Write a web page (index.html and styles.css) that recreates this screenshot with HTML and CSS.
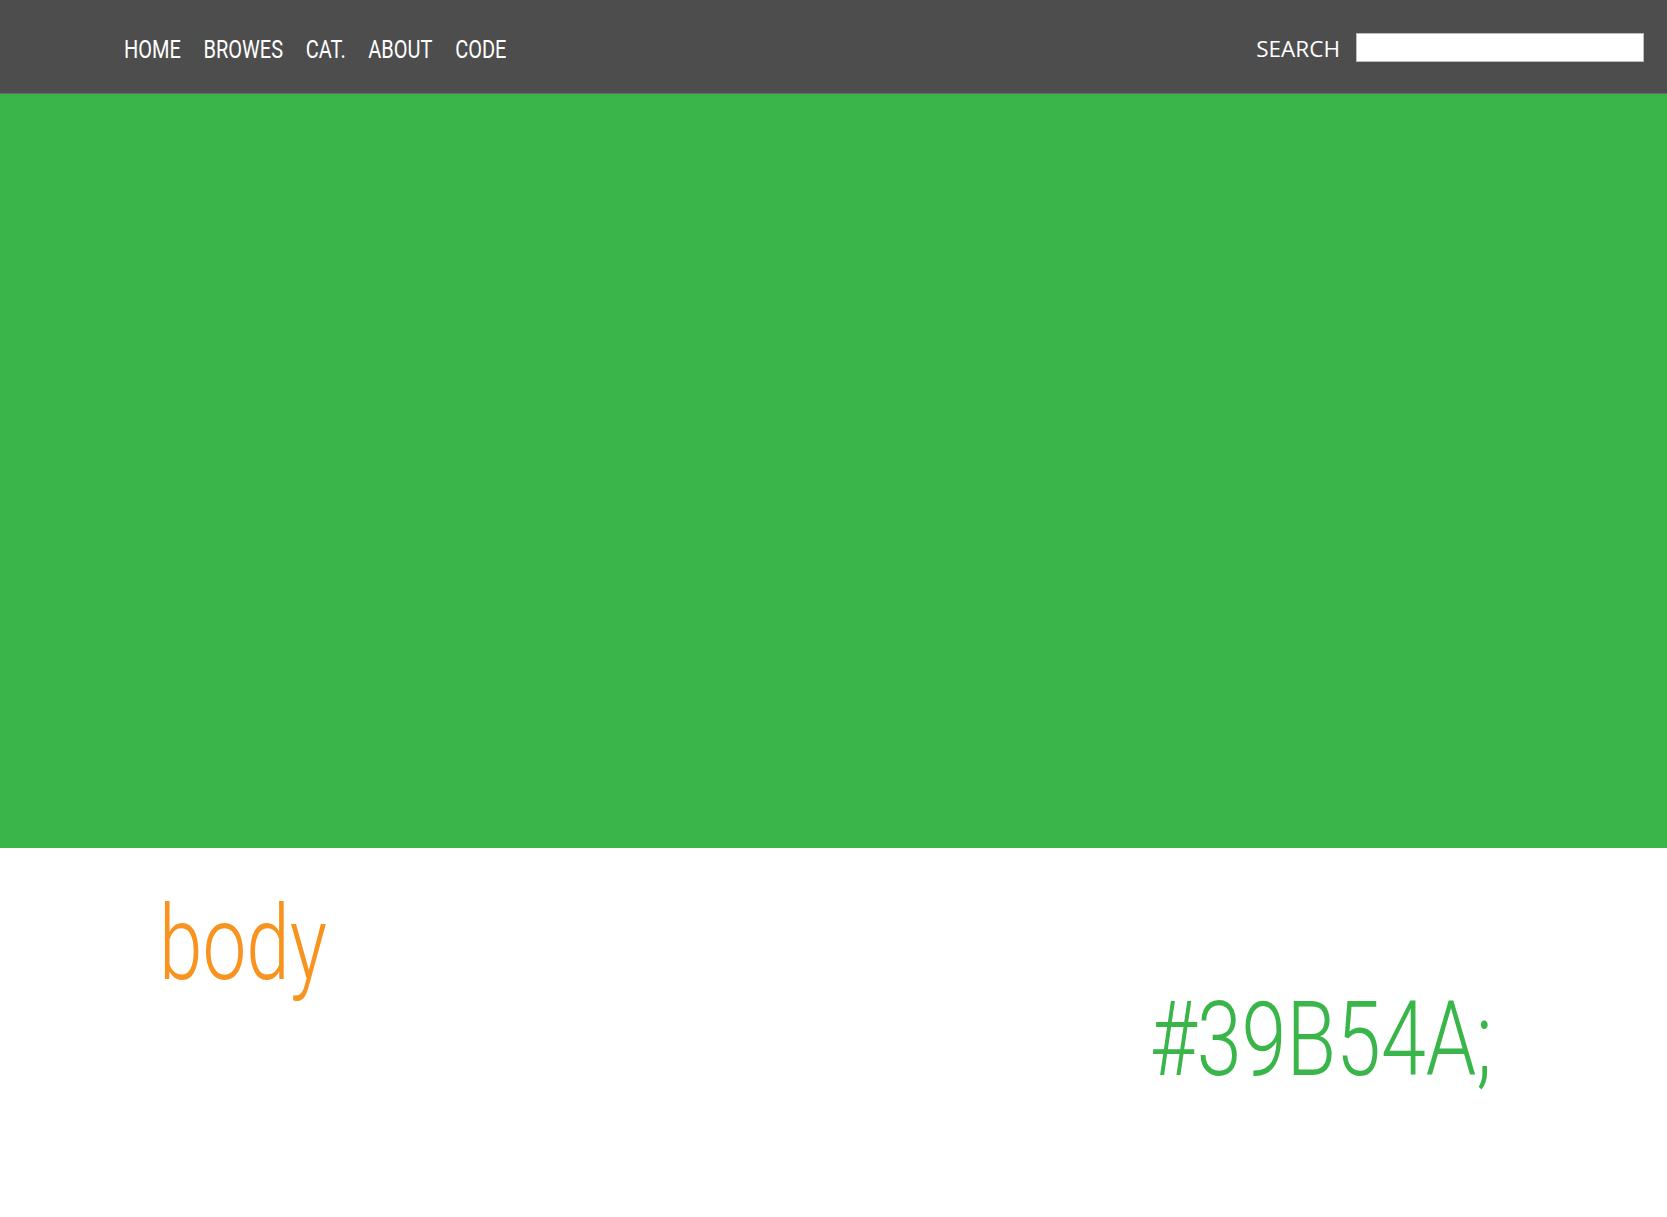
FILE: index.html
```html
<!DOCTYPE html>
<html lang="en">
<head>
<meta charset="utf-8">
<title>Colour</title>
<link rel="stylesheet" href="styles.css">
</head>
<body>
<header class="topbar">
  <nav class="nav">
    <a class="nav-link" href="#">HOME</a>
    <a class="nav-link" href="#">BROWES</a>
    <a class="nav-link" href="#">CAT.</a>
    <a class="nav-link" href="#">ABOUT</a>
    <a class="nav-link" href="#">CODE</a>
  </nav>
  <form class="search">
    <label class="search-label" for="q">SEARCH</label>
    <input class="search-input" id="q" type="text">
  </form>
</header>
<main class="hero"></main>
<section class="swatch">
  <div class="swatch-name">body</div>
  <div class="swatch-hex">#39B54A;</div>
</section>
</body>
</html>
```
FILE: styles.css
```css
html, body {
  margin: 0;
  padding: 0;
  background: #ffffff;
}
.topbar {
  height: 93px;
  background: #4d4d4d;
  border-bottom: 1px solid #6a6a6a;
  display: flex;
  align-items: center;
  justify-content: space-between;
  padding: 0 23px 0 124px;
}
.nav {
  display: flex;
  gap: 30px;
  transform: scaleX(0.755);
  transform-origin: left center;
  margin-top: 5px;
}
.nav-link {
  font-family: Roboto, "Liberation Sans", sans-serif;
  font-weight: 400;
  font-size: 26.5px;
  line-height: 1;
  color: #ffffff;
  text-decoration: none;
}
.search {
  display: flex;
  align-items: center;
  gap: 16px;
  margin: 0;
}
.search-label {
  font-family: "Open Sans", "Liberation Sans", sans-serif;
  font-size: 22.5px;
  color: #ffffff;
  line-height: 1;
  margin-top: 6px;
}
.search-input {
  width: 286px;
  height: 27px;
  box-sizing: content-box;
  padding: 0;
  border: 1px solid #bdbdbd;
  background: #ffffff;
  margin: 1px 0 0 0;
}
.hero {
  display: block;
  height: 754px;
  background: #3ab54a;
}
.swatch {
  display: flex;
  align-items: flex-start;
  justify-content: space-between;
  padding: 0 175px 0 159px;
  height: 369px;
}
.swatch-name {
  font-family: Roboto, "Liberation Sans", sans-serif;
  font-weight: 300;
  font-size: 103px;
  line-height: 1;
  color: #f7931e;
  padding-top: 44px;
  transform: scaleX(0.76);
  transform-origin: left top;
}
.swatch-hex {
  font-family: Roboto, "Liberation Sans", sans-serif;
  font-weight: 300;
  font-size: 103px;
  line-height: 1;
  color: #39b54a;
  padding-top: 140px;
  transform: scaleX(0.785);
  transform-origin: right top;
}
```
